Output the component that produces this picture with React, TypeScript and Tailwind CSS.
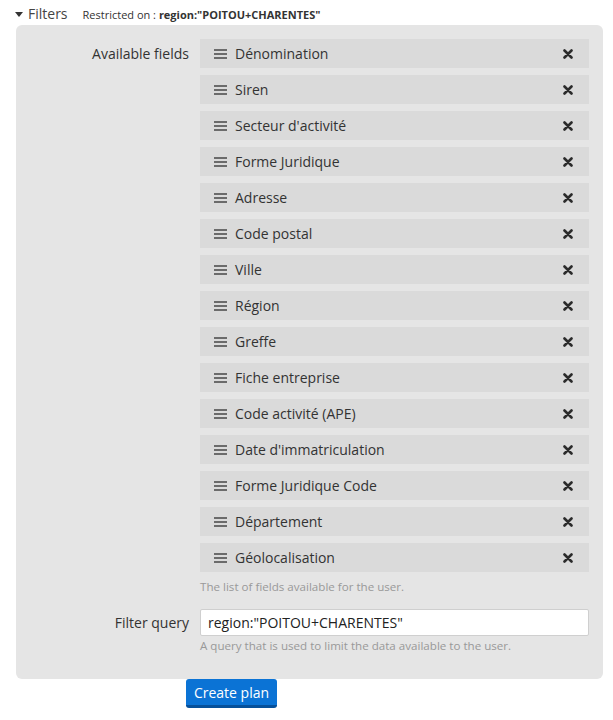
import React from "react";

const fields = [
  "Dénomination",
  "Siren",
  "Secteur d'activité",
  "Forme Juridique",
  "Adresse",
  "Code postal",
  "Ville",
  "Région",
  "Greffe",
  "Fiche entreprise",
  "Code activité (APE)",
  "Date d'immatriculation",
  "Forme Juridique Code",
  "Département",
  "Géolocalisation",
];

function Hamburger() {
  return (
    <svg width="13" height="11" viewBox="0 0 13 11" className="shrink-0">
      <rect x="0" y="1" width="13" height="2" fill="#6b6b6b" />
      <rect x="0" y="5" width="13" height="2" fill="#6b6b6b" />
      <rect x="0" y="9" width="13" height="2" fill="#6b6b6b" />
    </svg>
  );
}

function Cross() {
  return (
    <svg width="10" height="10" viewBox="0 0 10 10">
      <path d="M1.5 1.5 L8.5 8.5 M8.5 1.5 L1.5 8.5" stroke="#2b2b2b" strokeWidth="2.6" strokeLinecap="round" />
    </svg>
  );
}

export default function App() {
  return (
    <div
      className="w-[613px] h-[720px] bg-white text-[#333] overflow-hidden"
      style={{ fontFamily: '"Open Sans", "Noto Sans", sans-serif' }}
    >
      <div className="flex items-end h-[25px] pl-[15px] pb-[1px]">
        <svg width="8" height="6" viewBox="0 0 8 6" className="mb-[6px]">
          <path d="M0 0 L8 0 L4 5 Z" fill="#333" />
        </svg>
        <span className="ml-[5px] text-[14px] leading-[20px] text-[#444]">Filters</span>
        <span className="ml-[15px] text-[11px] leading-[18px] text-[#333]">
          Restricted on : <b className="font-bold">region:"POITOU+CHARENTES"</b>
        </span>
      </div>
      <div className="ml-[16px] w-[587px] bg-[#e5e5e5] rounded-[6px] pt-[14px] pb-[25px]">
        <div className="flex">
          <div className="w-[173px] text-right text-[14px] leading-[29px] text-[#333]">
            Available fields
          </div>
          <div className="ml-[11px] w-[389px]">
            <div className="flex flex-col gap-[7px]">
              {fields.map((f) => (
                <div
                  key={f}
                  className="h-[29px] bg-[#dadada] flex items-center pl-[14px] pr-[16px]"
                >
                  <Hamburger />
                  <span className="ml-[8px] text-[14px] text-[#333] flex-1">{f}</span>
                  <Cross />
                </div>
              ))}
            </div>
            <div className="mt-[6px] text-[11.6px] leading-[17px] text-[#999]">
              The list of fields available for the user.
            </div>
          </div>
        </div>
        <div className="flex mt-[14px]">
          <div className="w-[173px] text-right text-[14px] leading-[27px] text-[#333]">
            Filter query
          </div>
          <div className="ml-[11px] w-[389px]">
            <div className="h-[27px] bg-white border border-[#cfcfcf] rounded-[2px] flex items-center pl-[7px] text-[14px] text-[#222]">
              region:"POITOU+CHARENTES"
            </div>
            <div className="mt-[1px] text-[11.6px] leading-[17px] text-[#999]">
              A query that is used to limit the data available to the user.
            </div>
          </div>
        </div>
      </div>
      <div className="ml-[186px] w-[91px] h-[29px] bg-[#0b73d5] border-b-[3px] border-[#06509a] rounded-[3px] flex items-center justify-center text-white text-[14px] font-medium">
        Create plan
      </div>
    </div>
  );
}
